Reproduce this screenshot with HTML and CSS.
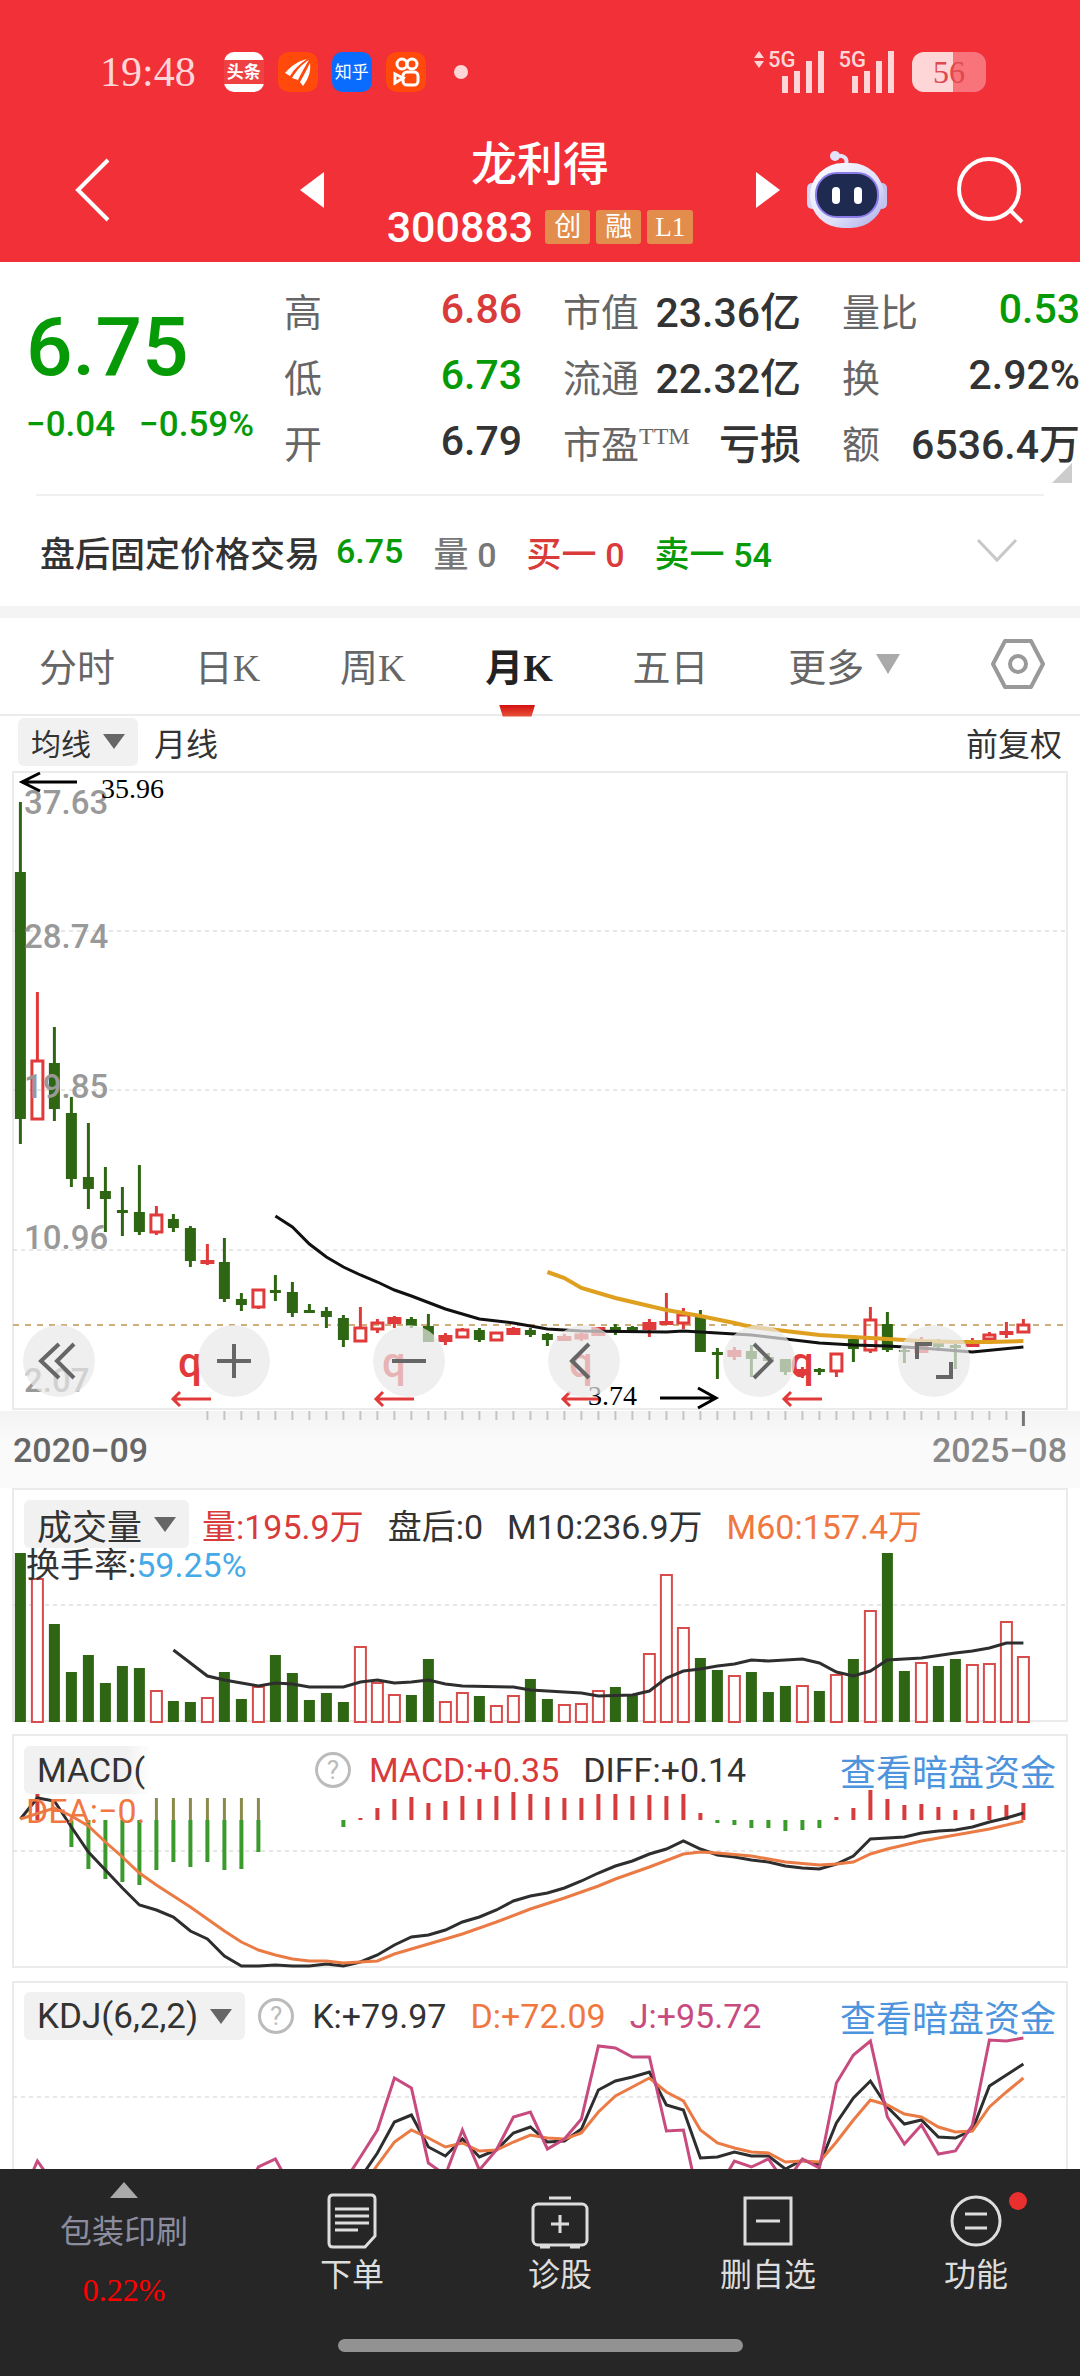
FILE: index.html
```html
<!DOCTYPE html>
<html lang="zh-CN">
<head>
    <meta charset="UTF-8">
    <meta name="viewport" content="width=device-width, initial-scale=1.0">
    <title>龙利得 300883</title>
    <link rel="stylesheet" href="styles.css">
</head>
<body>
    <header class="top">
        <div class="status">
            <span class="clock">19:48</span>
            <div class="apps">
                <span class="app toutiao"><b>头条</b></span>
                <svg class="app" viewBox="0 0 40 40">
                    <rect width="40" height="40" rx="10" fill="#ff4a0c"/>
                    <path d="M7 21C13 14 20 9 29 7C22 12 16 17 12 24ZM14 26C19 18 24 12 31 8C27 15 23 21 20 28ZM22 30C26 23 29 17 32 11C33 19 31 26 25 34Z" fill="#fff"/>
                </svg>
                <span class="app zhihu">知乎</span>
                <svg class="app" viewBox="0 0 40 40" fill="none" stroke="#fff" stroke-width="3">
                    <rect width="40" height="40" rx="10" fill="#ff4a0c" stroke="none"/>
                    <circle cx="16" cy="12" r="5"/>
                    <circle cx="26" cy="12" r="5"/>
                    <rect x="17" y="20" width="15" height="13" rx="4"/>
                    <path d="M17 26L9 22V31Z"/>
                </svg>
                <i class="dot"></i>
            </div>
            <div class="signal">
                <svg width="12" height="20" viewBox="0 0 12 20"><path d="M1 8L6 1L11 8ZM1 11L6 18L11 11Z"/></svg>
                <span>5G</span>
                <svg width="42" height="44" viewBox="0 0 42 44"><path d="M0 26h6v17h-6ZM12 21h6v22h-6ZM24 11h6v32h-6ZM36 1h6v42h-6Z"/></svg>
            </div>
            <div class="signal second">
                <span>5G</span>
                <svg width="42" height="44" viewBox="0 0 42 44"><path d="M0 26h6v17h-6ZM12 21h6v22h-6ZM24 11h6v32h-6ZM36 1h6v42h-6Z"/></svg>
            </div>
            <span class="battery">56</span>
        </div>
        <nav class="titlebar">
            <div class="side">
                <button aria-label="返回">
                    <svg width="36" height="66" viewBox="0 0 36 66"><path d="M33 3L3 33L33 63" fill="none" stroke="#fff" stroke-width="4"/></svg>
                </button>
                <button aria-label="上一只">
                    <svg width="24" height="36" viewBox="0 0 24 36"><path d="M24 0L0 18L24 36Z" fill="#fff"/></svg>
                </button>
            </div>
            <div class="stock">
                <h1>龙利得</h1>
                <p class="code"><span>300883</span><b>创</b><b>融</b><b>L1</b></p>
            </div>
            <div class="side">
                <button aria-label="下一只">
                    <svg width="24" height="36" viewBox="0 0 24 36"><path d="M0 0L24 18L0 36Z" fill="#fff"/></svg>
                </button>
                <button class="robot" aria-label="智能助手">
                    <svg width="82" height="78" viewBox="0 0 82 78">
                        <defs>
                            <linearGradient id="shell" x1="0" y1="0" x2="1" y2="1">
                                <stop offset="0" stop-color="#fff"/>
                                <stop offset=".6" stop-color="#dfe0fa"/>
                                <stop offset="1" stop-color="#a9a8e8"/>
                            </linearGradient>
                        </defs>
                        <path d="M40 14C42 7 38 4 30 5" fill="none" stroke="#e4e2f8" stroke-width="4"/>
                        <circle cx="29" cy="5" r="5" fill="#e4e2f8"/>
                        <rect x="1" y="32" width="10" height="26" rx="5" fill="#d5d6f5"/>
                        <rect x="71" y="32" width="10" height="26" rx="5" fill="#c3c3f0"/>
                        <rect x="4" y="12" width="74" height="65" rx="33" fill="url(#shell)"/>
                        <rect x="10" y="22" width="62" height="44" rx="21" fill="#1f2a50" stroke="#8a7be8" stroke-width="2"/>
                        <rect x="26" y="36" width="8" height="17" rx="4" fill="#fff"/>
                        <rect x="48" y="36" width="8" height="17" rx="4" fill="#fff"/>
                    </svg>
                </button>
                <button class="search" aria-label="搜索">
                    <svg width="68" height="68" viewBox="0 0 68 68" fill="none" stroke="#fff" stroke-width="4"><circle cx="33" cy="33" r="30"/><path d="M54 54L66 66"/></svg>
                </button>
            </div>
        </nav>
    </header>

    <section class="quote">
        <div class="now">
            <p class="price">6.75</p>
            <p class="change"><span>−0.04</span><span>−0.59%</span></p>
        </div>
        <dl>
            <div><dt>高</dt><dd class="red">6.86</dd></div>
            <div><dt>低</dt><dd class="green">6.73</dd></div>
            <div><dt>开</dt><dd>6.79</dd></div>
        </dl>
        <dl>
            <div><dt>市值</dt><dd>23.36亿</dd></div>
            <div><dt>流通</dt><dd>22.32亿</dd></div>
            <div><dt>市盈<sup>TTM</sup></dt><dd>亏损</dd></div>
        </dl>
        <dl>
            <div><dt>量比</dt><dd class="green">0.53</dd></div>
            <div><dt>换</dt><dd>2.92%</dd></div>
            <div><dt>额</dt><dd>6536.4万</dd></div>
        </dl>
        <i class="corner"></i>
    </section>

    <section class="after-hours">
        <span>盘后固定价格交易</span>
        <em class="green">6.75</em>
        <span class="grey pair">量 <em>0</em></span>
        <span class="red pair">买一 <em>0</em></span>
        <span class="green pair">卖一 <em>54</em></span>
        <button aria-label="展开">
            <svg width="42" height="26" viewBox="0 0 42 26"><path d="M2 2L21 22L40 2" fill="none" stroke="#c8c8c8" stroke-width="3"/></svg>
        </button>
    </section>

    <nav class="tabs">
        <button>分时</button>
        <button>日K</button>
        <button>周K</button>
        <button class="current">月K</button>
        <button>五日</button>
        <button>更多<i class="caret"></i></button>
        <button class="settings" aria-label="设置">
            <svg width="56" height="52" viewBox="0 0 56 52" fill="none" stroke="#999" stroke-width="4"><path d="M15 3H41L53 26L41 49H15L3 26Z" stroke-linejoin="round"/><circle cx="28" cy="26" r="8"/></svg>
        </button>
    </nav>

    <div class="subbar">
        <button class="pick">均线<i class="caret"></i></button>
        <span class="period">月线</span>
        <span class="adjust">前复权</span>
    </div>

    <section class="panel">
        <svg id="price" viewBox="12 771 1056 640"></svg>
        <div class="tools">
            <button aria-label="最左"><svg viewBox="0 0 72 72"><path d="M36 19L18 36L36 53M51 19L34 36L51 53"/></svg></button>
            <button aria-label="放大"><svg viewBox="0 0 72 72"><path d="M19 36H53M36 19V53"/></svg></button>
            <button aria-label="缩小"><svg viewBox="0 0 72 72"><path d="M19 36H53"/></svg></button>
            <button aria-label="左移"><svg viewBox="0 0 72 72"><path d="M41 19L24 36L41 53"/></svg></button>
            <button aria-label="右移"><svg viewBox="0 0 72 72"><path d="M31 19L48 36L31 53"/></svg></button>
            <button aria-label="全屏"><svg viewBox="0 0 72 72"><path d="M19 34V19H34M38 52H53V37"/></svg></button>
        </div>
    </section>
    <div class="dates"><span>2020−09</span><span>2025−08</span></div>

    <section class="panel">
        <svg id="volume" viewBox="12 1488 1056 236"></svg>
        <div class="legend">
            <p>
                <button class="pick">成交量<i class="caret"></i></button>
                <span class="red">量:195.9万</span>
                <span>盘后:0</span>
                <span>M10:236.9万</span>
                <span class="orange">M60:157.4万</span>
            </p>
            <p class="second-line">换手率:<span class="blue">59.25%</span></p>
        </div>
    </section>

    <section class="panel">
        <svg id="macd" viewBox="12 1734 1056 236"></svg>
        <div class="legend">
            <p>
                <button class="pick faded">MACD(</button>
                <span class="help">?</span>
                <span class="red">MACD:+0.35</span>
                <span>DIFF:+0.14</span>
                <a href="#">查看暗盘资金</a>
            </p>
            <p class="second-line orange">DEA:−0.</p>
        </div>
    </section>

    <section class="panel">
        <svg id="kdj" viewBox="12 1980 1056 189"></svg>
        <div class="legend">
            <p>
                <button class="pick">KDJ(6,2,2)<i class="caret"></i></button>
                <span class="help">?</span>
                <span>K:+79.97</span>
                <span class="orange">D:+72.09</span>
                <span class="pink">J:+95.72</span>
                <a href="#">查看暗盘资金</a>
            </p>
        </div>
    </section>

    <footer class="bottom">
        <div class="actions">
            <button class="sector"><i></i><span>包装印刷</span><strong>0.22%</strong></button>
            <button>
                <svg viewBox="0 0 60 56"><path d="M11 2H49Q53 2 53 6V43L43 54H11Q7 54 7 50V6Q7 2 11 2Z"/><path d="M13 16H47M13 23H47M13 30H47M13 37H36"/></svg>
                <span>下单</span>
            </button>
            <button>
                <svg viewBox="0 0 60 56"><rect x="3" y="11" width="54" height="41" rx="5"/><path d="M19 5H41M30 22V40M21 31H39M10 54H20M40 54H50"/></svg>
                <span>诊股</span>
            </button>
            <button>
                <svg viewBox="0 0 60 56"><rect x="7" y="5" width="46" height="46"/><path d="M18 28H42"/></svg>
                <span>删自选</span>
            </button>
            <button>
                <svg viewBox="0 0 60 56"><circle cx="30" cy="28" r="24"/><path d="M19 21H41M19 35H41"/></svg>
                <span>功能</span>
                <i class="badge"></i>
            </button>
        </div>
        <div class="home-bar"></div>
    </footer>

    <script>
        const GREEN = '#2f6613', RED = '#e03a3a', BLACK = '#2e2e2e', ORANGE = '#ea7b45', PINK = '#c84b80';

        // one row per month: type (g down, r up, f up and filled), high, body top, body bottom, low
        const candles = [
            ['g',802,872,1119,1144],['r',992,1060,1120,1120],['g',1027,1063,1109,1121],['g',1097,1113,1179,1187],
            ['g',1123,1177,1189,1209],['g',1167,1191,1199,1232],['g',1187,1210,1213,1236],['g',1165,1212,1232,1235],
            ['r',1206,1214,1233,1235],['g',1214,1219,1228,1232],['g',1226,1228,1261,1267],['f',1244,1260,1264,1265],
            ['g',1238,1262,1299,1302],['g',1293,1299,1305,1311],['r',1289,1289,1308,1309],['g',1275,1290,1293,1301],
            ['g',1282,1292,1313,1317],['g',1304,1310,1313,1313],['g',1307,1311,1317,1328],['g',1315,1318,1340,1347],
            ['r',1307,1327,1342,1342],['r',1319,1322,1330,1333],['f',1316,1317,1324,1328],['g',1317,1319,1326,1328],
            ['g',1314,1326,1342,1342],['f',1333,1335,1342,1345],['r',1328,1329,1338,1338],['g',1328,1330,1340,1342],
            ['r',1332,1332,1341,1341],['f',1327,1328,1335,1335],['g',1328,1330,1335,1337],['g',1333,1334,1340,1346],
            ['f',1334,1336,1341,1341],['r',1333,1334,1339,1341],['f',1327,1327,1336,1336],['g',1324,1327,1331,1335],
            ['g',1326,1327,1331,1332],['f',1319,1322,1330,1337],['f',1293,1321,1325,1325],['r',1308,1314,1324,1329],
            ['g',1310,1315,1352,1352],['g',1348,1352,1355,1379],['f',1347,1350,1357,1360],['g',1345,1351,1359,1377],
            ['g',1353,1357,1361,1361],['g',1359,1359,1372,1375],['f',1367,1369,1373,1378],['g',1368,1369,1372,1375],
            ['r',1353,1353,1372,1377],['g',1337,1339,1349,1362],['r',1307,1319,1351,1353],['g',1312,1324,1350,1352],
            ['g',1348,1350,1352,1363],['f',1337,1341,1353,1353],['g',1339,1342,1347,1351],['g',1343,1345,1348,1369],
            ['f',1338,1342,1347,1347],['r',1332,1334,1340,1344],['f',1322,1331,1335,1338],['r',1319,1324,1333,1333]
        ];
        const volumes = [169,144,98,50,67,39,56,54,32,21,20,25,50,23,36,67,49,22,29,20,76,40,28,27,63,21,30,26,17,27,
            43,23,18,19,32,35,27,69,148,95,64,52,47,50,30,36,37,31,48,63,112,169,51,60,56,63,58,59,101,66];
        const bars = [0,29,0,-27,-49,-59,-62,-65,-50,-42,-47,-42,-50,-49,-32,0,0,0,0,-7,2,12,21,23,17,19,24,21,24,28,
            26,23,22,22,26,26,24,25,24,26,7,-3,-5,-8,-8,-11,-10,-8,3,12,30,21,15,16,13,10,11,14,15,17];

        const x = i => Math.round(204 + 170 * i) / 10;
        const line = (pts, color, w) =>
            `<polyline points="${pts.map(p => x(p[0]) + ',' + p[1]).join(' ')}" fill="none" stroke="${color}" stroke-width="${w}"/>`;
        // the same for a series with one value for every month
        const run = (from, ys, color) => line(ys.map((y, i) => [from + i, y]), color, 3);
        const frame = (y, h) => `<rect x="13" y="${y}" width="1054" height="${h}" fill="#fff" stroke="#ebebeb" stroke-width="2"/>`;
        const dash = (y, color) => `<path d="M13 ${y}H1066" stroke="${color || '#e6e6e6'}" stroke-width="2" stroke-dasharray="${color ? '6 6' : '4 4'}"/>`;
        const text = (px, py, s, cls) => `<text x="${px}" y="${py}" class="${cls}">${s}</text>`;
        const put = (id, parts) => document.getElementById(id).innerHTML = parts.join('');

        function drawPrice() {
            const out = [frame(772, 637), dash(931), dash(1090), dash(1250), dash(1325, '#cfae7c')];
            candles.forEach(([type, high, top, bottom, low], i) => {
                const c = type === 'g' ? GREEN : RED;
                out.push(`<path d="M${x(i)} ${high}V${top}M${x(i)} ${bottom}V${low}" stroke="${c}" stroke-width="3"/>`);
                if (type === 'r') {
                    out.push(`<rect x="${x(i) - 5.5}" y="${top + 1}" width="11" height="${bottom - top - 2}" fill="none" stroke="${c}" stroke-width="3"/>`);
                } else {
                    const w = type === 'g' ? 11 : 14;
                    out.push(`<rect x="${x(i) - w / 2}" y="${top}" width="${w}" height="${bottom - top}" fill="${c}"/>`);
                }
            });
            out.push(line([[15,1216],[16,1227],[17,1244],[18,1257],[19,1267],[20,1275],[21,1282],[22,1290],[23,1296],[25,1309],[27,1319],[29,1323],[31,1329],[33,1331],[38,1332],[39,1331],[41,1333],[43,1335],[45,1339],[47,1343],[49,1345],[51,1346],[53,1348],[56,1352],[59,1347]], '#111', 3));
            out.push(line([[31,1272],[32,1278],[33,1288],[35,1298],[37,1306],[38,1310],[40,1316],[42,1323],[43,1327],[45,1331],[47,1335],[49,1337],[51,1339],[53,1341],[55,1342],[57,1342],[59,1341]], '#dfa01f', 4));
            [[814,'37.63'],[948,'28.74'],[1098,'19.85'],[1249,'10.96'],[1392,'2.07']].forEach(([y, s]) => out.push(text(24, y, s, 'axis')));
            [[178,171],[382,374],[569,561],[790,782]].forEach(([q, a]) => {
                out.push(text(q, 1377, 'q', 'mark'));
                out.push(`<path d="M${a + 40} 1399H${a + 2}M${a + 9} 1392L${a + 2} 1399L${a + 9} 1406" fill="none" stroke="${RED}" stroke-width="3"/>`);
            });
            out.push('<path d="M77 782H22M40 773L22 782L40 791M660 1398H716M698 1388L716 1398L698 1408" fill="none" stroke="#000" stroke-width="3"/>');
            out.push(text(101, 798, '35.96', 'extreme'), text(588, 1405, '3.74', 'extreme'));
            put('price', out);
        }

        function drawVolume() {
            const out = [frame(1489, 232), dash(1605)];
            volumes.forEach((v, i) => {
                if (candles[i][0] === 'g') {
                    out.push(`<rect x="${x(i) - 5.5}" y="${1722 - v}" width="11" height="${v}" fill="${GREEN}"/>`);
                } else {
                    out.push(`<rect x="${x(i) - 5.5}" y="${1723 - v}" width="11" height="${v - 1}" fill="#fff" stroke="#d94c4c" stroke-width="2"/>`);
                }
            });
            out.push(line([[9,1650],[10,1663],[11,1676],[12,1680],[13,1683],[14,1686],[15,1683],[16,1684],[17,1687],[19,1687],[20,1682],[21,1680],[22,1683],[23,1682],[24,1680],[25,1684],[26,1686],[29,1687],[30,1690],[33,1693],[34,1696],[36,1695],[37,1691],[38,1678],[39,1671],[40,1669],[41,1666],[42,1664],[43,1660],[44,1661],[46,1659],[47,1663],[48,1672],[49,1676],[50,1671],[51,1660],[53,1658],[55,1653],[56,1651],[57,1648],[58,1643],[59,1643]], BLACK, 3));
            put('volume', out);
        }

        function drawMacd() {
            const out = [frame(1735, 232), dash(1851)];
            bars.forEach((v, i) => {
                if (v) out.push(`<path d="M${x(i)} 1820v${-v}" stroke="${v > 0 ? '#d63c3c' : '#3a9a2c'}" stroke-width="4"/>`);
                if (i > 7 && i < 15) out.push(`<path d="M${x(i)} 1798v22" stroke="#8a8a4a" stroke-width="3"/>`);
            });
            out.push(run(0, [1819,1798,1801,1827,1852,1870,1888,1905,1910,1917,1931,1939,1956,1966,1966,1965,1966,1966,1964,1966,1962,1955,1945,1937,1935,1930,1922,1917,1910,1901,1896,1893,1888,1881,1873,1866,1861,1854,1849,1841,1849,1855,1857,1860,1862,1866,1868,1869,1864,1856,1839,1838,1837,1833,1831,1830,1827,1822,1818,1813], BLACK));
            out.push(line([[0,1819],[2,1808],[3,1816],[4,1826],[5,1842],[6,1857],[7,1873],[8,1885],[9,1896],[10,1907],[11,1919],[12,1931],[13,1942],[14,1950],[15,1955],[16,1959],[17,1961],[18,1961],[19,1963],[21,1961],[22,1954],[24,1944],[26,1934],[28,1922],[30,1909],[32,1898],[34,1886],[35,1879],[37,1867],[39,1854],[40,1852],[41,1853],[43,1856],[45,1862],[47,1865],[48,1864],[49,1862],[50,1854],[51,1849],[53,1841],[55,1835],[57,1829],[59,1821]], ORANGE, 3));
            put('macd', out);
        }

        function drawKdj() {
            put('kdj', [
                frame(1982, 240), dash(2097),
                run(20, [2178,2153,2122,2115,2147,2156,2139,2157,2150,2133,2127,2142,2141,2129,2090,2081,2077,2072,2105,2110,2158,2157,2152,2156,2156,2169,2160,2165,2123,2098,2081,2107,2124,2120,2137,2138,2130,2086,2075,2064], BLACK),
                run(20, [2190,2165,2142,2130,2138,2147,2143,2151,2150,2142,2135,2138,2139,2133,2112,2096,2087,2078,2092,2101,2130,2143,2148,2152,2153,2162,2161,2162,2142,2120,2100,2105,2114,2117,2127,2132,2131,2107,2092,2078], ORANGE),
                run(0, [2200,2161,2185,2200,2200,2200,2200,2200,2200,2200,2200,2200,2200,2200,2167,2159,2190,2200,2200,2183,2157,2130,2078,2088,2163,2175,2130,2170,2150,2117,2112,2149,2139,2119,2046,2048,2057,2057,2131,2130,2208,2190,2161,2167,2159,2183,2159,2168,2083,2055,2041,2117,2144,2125,2154,2151,2125,2040,2041,2038], PINK)
            ]);
        }

        drawPrice();
        drawVolume();
        drawMacd();
        drawKdj();

        // month ticks under the price chart
        const ticks = candles.map((c, i) => i < 11 ? '' : `<path d="M${x(i)} 0v${i === 59 ? 15 : 9}" stroke="${i === 59 ? '#777' : '#c4c4c4'}" stroke-width="${i === 59 ? 3 : 2}"/>`);
        document.querySelector('.dates').insertAdjacentHTML('afterbegin', `<svg viewBox="0 0 1080 16">${ticks.join('')}</svg>`);
    </script>
</body>
</html>
```

FILE: styles.css
```css
* {
    box-sizing: border-box;
}
body {
    margin: 0;
    background: #fff;
    color: #333;
    font-family: Roboto, "Noto Sans CJK SC", sans-serif;
    font-size: 35px;
    overflow-x: hidden;
}
h1, p, dl, dd {
    margin: 0;
}
button {
    padding: 0;
    border: none;
    background: none;
    color: inherit;
    font: inherit;
    cursor: pointer;
}
svg {
    display: block;
}
em, i {
    font-style: normal;
}
.red { color: #d93a3a; }
.green { color: #069a06; }
.grey { color: #777; }
.orange { color: #f07840; }
.blue { color: #45aae8; }
.pink { color: #c84b80; }

/* header */
.top {
    background: #f13038;
    color: #fff;
}
.status {
    display: flex;
    align-items: center;
    height: 132px;
    padding: 12px 94px 0 100px;
    color: #ffd6d8;
}
.clock {
    font-family: "Liberation Serif", serif;
    font-size: 42px;
}
.apps {
    display: flex;
    align-items: center;
    flex: 1;
    gap: 14px;
    margin-left: 28px;
}
.app {
    width: 40px;
    height: 40px;
    border-radius: 10px;
    color: #fff;
    font-size: 17px;
    line-height: 40px;
    text-align: center;
}
.toutiao {
    padding: 8px 0;
    background: #fff;
}
.toutiao b {
    display: block;
    background: #f04142;
    line-height: 24px;
}
.zhihu {
    background: #0a6cff;
}
.dot {
    width: 14px;
    height: 14px;
    margin-left: 14px;
    border-radius: 50%;
    background: #ffd6d8;
}
.signal {
    display: flex;
    height: 44px;
    fill: #ffd6d8;
    font-size: 22px;
    font-weight: 500;
    line-height: 20px;
}
.signal span {
    margin: 0 -14px 0 3px;
}
.second {
    margin: 0 18px 0 12px;
}
.battery {
    width: 74px;
    height: 40px;
    border-radius: 12px;
    background: linear-gradient(90deg, #ffd6d8 56%, #f8737a 56%);
    color: #e0484e;
    font-family: "Liberation Serif", serif;
    font-size: 32px;
    line-height: 40px;
    text-align: center;
}
.titlebar {
    display: grid;
    grid-template-columns: 1fr 432px 1fr;
    height: 130px;
}
.side {
    display: flex;
    align-items: center;
    padding-bottom: 14px;
}
.side:first-child {
    justify-content: space-between;
    padding-left: 75px;
}
.side:last-child {
    padding-right: 56px;
}
.robot {
    margin-left: 26px;
}
.search {
    margin-left: auto;
}
.stock {
    text-align: center;
}
.stock h1 {
    font-size: 46px;
    font-weight: 500;
    line-height: 64px;
}
.code {
    display: flex;
    align-items: center;
    justify-content: center;
    gap: 6px;
    height: 62px;
}
.code span {
    margin-right: 6px;
    font-size: 43px;
    font-weight: 500;
}
.code b {
    min-width: 45px;
    padding: 0 8px;
    border-radius: 3px;
    background: #e38d4c;
    font-family: "Liberation Serif", "Noto Sans CJK SC", serif;
    font-size: 27px;
    font-weight: normal;
    line-height: 34px;
}

/* quote */
.quote {
    position: relative;
    display: grid;
    grid-template-columns: 217px 1fr 1fr 1fr;
    column-gap: 41px;
    padding: 14px 0 22px 26px;
    white-space: nowrap;
}
.quote::after {
    content: "";
    position: absolute;
    left: 36px;
    right: 36px;
    bottom: 0;
    border-bottom: 2px solid #f0f0f0;
}
.now {
    padding-top: 31px;
    color: #069a06;
    font-weight: 500;
}
.price {
    font-size: 82px;
    line-height: 80px;
}
.change {
    display: flex;
    gap: 24px;
    margin-top: 18px;
    font-size: 35px;
    line-height: 40px;
}
.quote dl div {
    display: flex;
    align-items: center;
    justify-content: space-between;
    height: 66px;
}
.quote dt {
    color: #666;
    font-size: 38px;
}
.quote sup {
    font-family: "Liberation Serif", serif;
    font-size: 24px;
}
.quote dd {
    font-size: 41px;
    font-weight: 500;
}
.corner {
    position: absolute;
    right: 8px;
    bottom: 13px;
    border-left: 20px solid transparent;
    border-bottom: 20px solid #ccc;
}
.after-hours {
    display: flex;
    align-items: center;
    gap: 16px;
    height: 110px;
    padding: 0 62px 0 40px;
    font-weight: 500;
}
.after-hours em {
    font-size: 34px;
}
.pair {
    margin-left: 14px;
}
.after-hours button {
    margin-left: auto;
}

/* chart tabs */
.tabs {
    display: flex;
    align-items: center;
    justify-content: space-between;
    height: 110px;
    padding: 0 34px 4px 39px;
    border-top: 12px solid #f4f4f4;
    border-bottom: 2px solid #ebebeb;
    color: #666;
    font-family: "Liberation Serif", "Noto Sans CJK SC", serif;
    font-size: 38px;
}
.tabs button {
    display: flex;
    align-items: center;
}
.tabs .current {
    position: relative;
    color: #222;
    font-weight: bold;
}
.current::after {
    content: "";
    position: absolute;
    left: 14px;
    top: 68px;
    width: 36px;
    height: 12px;
    background: linear-gradient(#d31010, #e8553c);
    clip-path: polygon(0 0, 100% 0, 90% 100%, 10% 100%);
}
.tabs .settings {
    margin-left: 10px;
}
.caret {
    display: inline-block;
    margin-left: 12px;
    border: 11px solid transparent;
    border-top: 15px solid #666;
    border-bottom: 0;
}
.tabs .caret {
    border-width: 20px 12px 0;
    border-top-color: #aaa;
}
.subbar {
    display: flex;
    align-items: center;
    gap: 16px;
    height: 55px;
    padding: 0 18px 4px;
    font-size: 32px;
}
.pick {
    display: flex;
    align-items: center;
    height: 48px;
    padding: 0 13px;
    border-radius: 6px;
    background: #f1f1f1;
}
.subbar .pick {
    font-size: 30px;
}
.adjust {
    margin-left: auto;
}

/* charts */
.panel {
    display: grid;
    margin: 0 12px 10px;
}
.panel > * {
    grid-area: 1 / 1;
    min-width: 0;
}
.panel > svg {
    width: 100%;
}
.axis {
    fill: #999;
    font-size: 33px;
    font-weight: 500;
}
.extreme {
    fill: #000;
    font-family: "Liberation Serif", serif;
    font-size: 28px;
}
.mark {
    fill: #e03a3a;
    font-size: 42px;
    font-weight: 500;
}
.tools {
    display: flex;
    align-self: end;
    gap: 103px;
    padding: 0 0 14px 11px;
}
.tools button {
    width: 72px;
    height: 72px;
    border-radius: 50%;
    background: rgba(232, 232, 232, 0.7);
}
.tools path {
    fill: none;
    stroke: #666;
    stroke-width: 4;
}
.dates {
    display: flex;
    flex-wrap: wrap;
    align-content: flex-start;
    justify-content: space-between;
    height: 77px;
    margin-top: -10px;
    padding: 0 13px;
    background: linear-gradient(#f3f3f3, #fafafa 40%);
    color: #666;
    font-size: 34px;
    font-weight: 500;
    line-height: 46px;
}
.dates svg {
    flex: none;
    width: calc(100% + 26px);
    margin: 0 -13px;
}
.dates span:last-child {
    color: #888;
}
.legend {
    padding: 12px 12px 0;
    font-size: 34px;
    white-space: nowrap;
}
.legend p {
    display: flex;
    align-items: center;
    gap: 24px;
    height: 48px;
}
.legend .pick {
    margin-right: -11px;
}
.legend .pick:has(.caret) {
    font-size: 35px;
}
.legend a {
    margin-left: auto;
    color: #4d94dd;
    font-size: 36px;
    text-decoration: none;
}
.legend .second-line {
    display: block;
    height: 36px;
    padding-left: 2px;
    line-height: 34px;
}
.legend .faded {
    width: 128px;
    margin-right: 139px;
    overflow: hidden;
    background: linear-gradient(90deg, #f1f1f1 80%, #fff);
}
.help {
    width: 36px;
    height: 36px;
    margin-right: -6px;
    border: 3px solid #bbb;
    border-radius: 50%;
    color: #bbb;
    font-size: 26px;
    line-height: 30px;
    text-align: center;
}

/* bottom bar */
.bottom {
    position: sticky;
    bottom: 0;
    height: 207px;
    margin-top: -10px;
    background: #262626;
    color: #ddd;
}
.actions {
    display: grid;
    grid-template-columns: 248fr 208fr 208fr 208fr 208fr;
    height: 170px;
    font-size: 32px;
    line-height: 44px;
}
.actions button {
    position: relative;
    display: flex;
    flex-direction: column;
    align-items: center;
    padding-top: 24px;
}
.actions svg {
    width: 60px;
    height: 56px;
    margin-bottom: 4px;
    fill: none;
    stroke: #ddd;
    stroke-width: 3;
}
.actions .sector {
    padding-top: 13px;
    color: #8b8d9f;
}
.sector i {
    margin-bottom: 12px;
    border: 14px solid transparent;
    border-bottom: 16px solid #aaa;
    border-top: 0;
}
.sector strong {
    margin-top: 14px;
    color: #f00;
    font-family: "Liberation Serif", serif;
    font-weight: normal;
}
.badge {
    position: absolute;
    left: calc(50% + 33px);
    top: 23px;
    width: 18px;
    height: 18px;
    border-radius: 50%;
    background: #ea2f2f;
}
.home-bar {
    width: 405px;
    height: 13px;
    margin: 0 auto;
    border-radius: 7px;
    background: #929292;
}
```
